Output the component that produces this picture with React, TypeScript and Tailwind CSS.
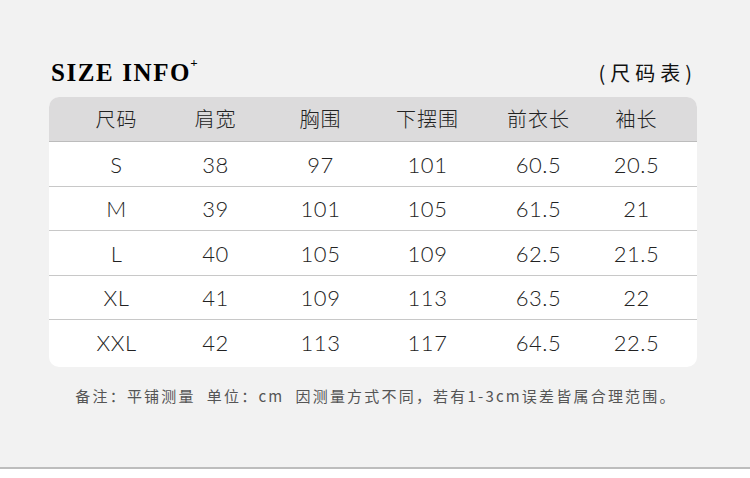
const headers = ["尺码", "肩宽", "胸围", "下摆围", "前衣长", "袖长"];

const rows = [
  ["S", "38", "97", "101", "60.5", "20.5"],
  ["M", "39", "101", "105", "61.5", "21"],
  ["L", "40", "105", "109", "62.5", "21.5"],
  ["XL", "41", "109", "113", "63.5", "22"],
  ["XXL", "42", "113", "117", "64.5", "22.5"],
];

const rowHeights = ["h-[45px]", "h-[44px]", "h-[45px]", "h-[44px]", "h-[47px]"];

const cols = "grid grid-cols-[99px_99px_111px_103px_119px_77px] pl-[18px]";

const App = () => {
  return (
    <div className="w-[750px] h-[478px] bg-white flex flex-col">
      <div className="h-[469px] bg-[#f2f2f2] border-b-2 border-[#bdbdbd] flex flex-col pl-[49px] pr-[53px] pt-[54px]">
        <div className="flex items-end justify-between h-[32px]">
          <p className="font-['Liberation_Serif',serif] font-bold text-[25px] leading-none text-black tracking-[1.6px] pl-[2px] mb-[1px]">
            SIZE INFO<sup className="text-[13px] align-top relative top-[3px] -ml-[1px]">+</sup>
          </p>
          <p className="font-['Noto_Sans_CJK_SC',sans-serif] text-[20px] leading-none text-[#111] tracking-[5px] mb-[3px]">
            (尺码表)
          </p>
        </div>

        <div className="mt-[11px] rounded-[10px] overflow-hidden bg-white font-['Lato','Noto_Sans_CJK_SC',sans-serif] text-[22px] text-[#222]">
          <div className={`${cols} h-[45px] items-center bg-[#dcdbdc] border-b border-[#bcbcbc]`}>
            {headers.map((h) => (
              <span key={h} className="text-center font-['Noto_Sans_CJK_SC',sans-serif] font-light text-[20px] tracking-[1px]">
                {h}
              </span>
            ))}
          </div>
          {rows.map((r, i) => (
            <div
              key={r[0]}
              className={`${cols} items-center ${rowHeights[i]} ${i < rows.length - 1 ? "border-b border-[#c8c8c8]" : "pb-[3px]"}`}
            >
              {r.map((c, j) => (
                <span key={j} className="text-center font-light tracking-[0.5px]">
                  {c}
                </span>
              ))}
            </div>
          ))}
        </div>

        <p className="mt-[18px] text-center font-['Noto_Sans_CJK_SC',sans-serif] text-[15px] leading-[22px] text-[#555] tracking-[2.2px] pl-[6px]">
          备注：平铺测量&nbsp;&nbsp;单位：cm&nbsp;&nbsp;因测量方式不同，若有1-3cm误差皆属合理范围。
        </p>
      </div>
    </div>
  );
};

export default App;
